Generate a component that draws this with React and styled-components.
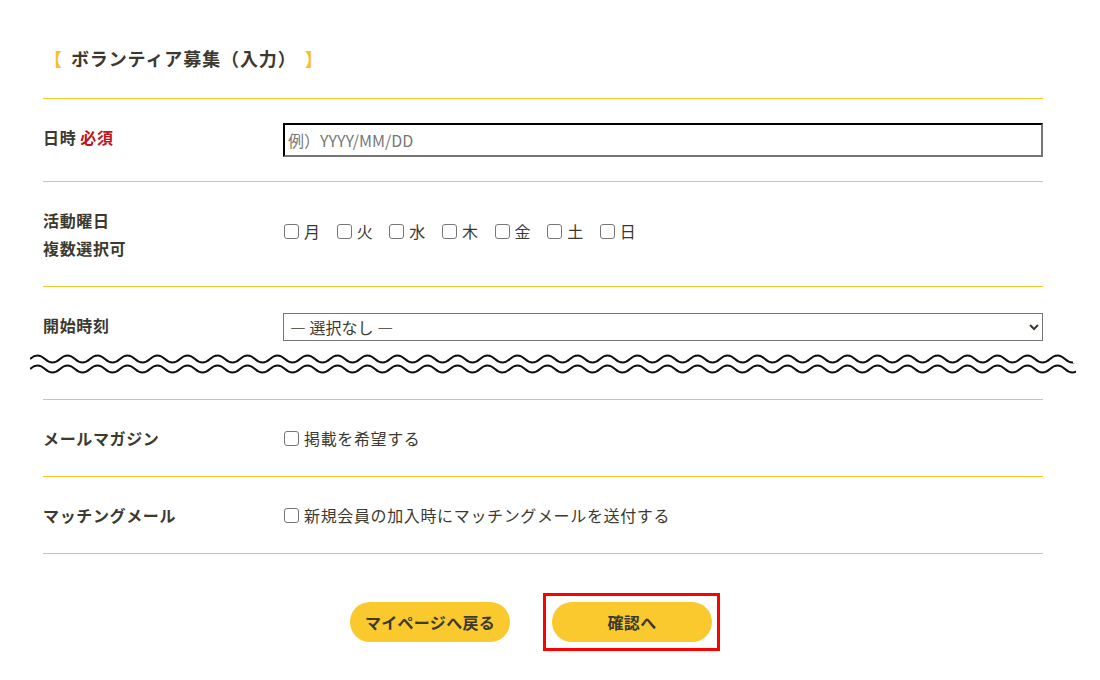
import styled, { createGlobalStyle } from "styled-components";

const GlobalStyle = createGlobalStyle`
  body {
    margin: 0;
    background: #fff;
    font-family: "Noto Sans CJK JP", "Noto Sans", sans-serif;
    color: #3c3a30;
  }
`;

const Page = styled.div`
  width: 1000px;
  padding: 0 0 40px 43px;
`;

const Title = styled.h2`
  margin: 0;
  padding: 46px 0 28px 1px;
  font-size: 18px;
  line-height: 24px;
  font-weight: 700;
  border-bottom: 1px solid #f7c72a;
  letter-spacing: 0.05em;
`;

const Bracket = styled.span`
  color: #f7c02a;
  margin: ${(p) => (p.$close ? "0 0 0 17px" : "0 8px 0 0")};
`;

const Row = styled.div`
  display: grid;
  grid-template-columns: 240px 1fr;
  align-items: start;
  padding: 24px 0;
  border-bottom: 1px solid #f7c72a;
`;

const Label = styled.div`
  font-size: 16px;
  font-weight: 700;
  line-height: 28px;
  letter-spacing: 0.04em;
`;

const Required = styled.span`
  color: #c0141c;
  margin-left: 4px;
`;

const TextInput = styled.input`
  box-sizing: border-box;
  width: 760px;
  height: 34px;
  border: 2px inset #767676;
  border-top-color: #222;
  border-left-color: #222;
  padding: 0 3px;
  font-family: inherit;
  font-size: 16px;
  color: #333;
  &::placeholder {
    color: #777;
  }
`;

const Days = styled.div`
  display: flex;
  align-items: center;
  height: 56px;
  padding-bottom: 6px;
  box-sizing: border-box;
`;

const Check = styled.label`
  display: inline-flex;
  align-items: center;
  font-size: 16px;
  line-height: 28px;
  letter-spacing: 0.04em;
  margin-right: ${(p) => (p.$gap ? "15px" : "0")};
  color: #3c3a30;
`;

const Box = styled.input.attrs({ type: "checkbox" })`
  appearance: none;
  flex: none;
  box-sizing: border-box;
  width: 15px;
  height: 15px;
  margin: 0 5px 0 1px;
  border: 1px solid #767676;
  border-radius: 3px;
  background: #fff;
  &:checked {
    background: #0075ff;
    border-color: #0075ff;
  }
`;

const SelectCell = styled.div`
  display: flex;
  align-items: center;
  height: 32px;
`;

const Select = styled.select`
  box-sizing: border-box;
  width: 760px;
  height: 28px;
  border: 1px solid #767676;
  border-radius: 0;
  background: #fff;
  font-family: inherit;
  font-size: 16px;
  color: #3c3a30;
  padding: 0 2px;
`;

const Cut = styled.svg`
  grid-column: 1 / -1;
  display: block;
  margin: 8px 0 0 -13px;
  width: 1046px;
  height: 24px;
`;

const Actions = styled.div`
  display: flex;
  justify-content: center;
  align-items: center;
  gap: 33px;
  padding: 39px 16px 0 0;
`;

const Button = styled.button`
  width: 160px;
  height: 40px;
  border: none;
  border-radius: 20px;
  background: #fac92e;
  color: #3c3a30;
  font-family: inherit;
  font-size: 16px;
  font-weight: 700;
  letter-spacing: 0.02em;
  cursor: pointer;
`;

const Highlight = styled.div`
  border: 3px solid #f00;
  padding: 6px 5px 6px 6px;
  display: flex;
`;

function wavePath(y) {
  let d = `M0 ${y}`;
  for (let x = 0; x < 1045; x += 30) {
    d += ` q7.5 -7 15 0 t15 0`;
  }
  return d;
}

const days = ["月", "火", "水", "木", "金", "土", "日"];

export default function App() {
  return (
    <Page>
      <GlobalStyle />
      <Title>
        <Bracket>【</Bracket>ボランティア募集（入力）<Bracket $close>】</Bracket>
      </Title>

      <Row>
        <Label>
          日時<Required>必須</Required>
        </Label>
        <TextInput placeholder="例）YYYY/MM/DD" />
      </Row>

      <Row>
        <Label>
          活動曜日
          <br />
          複数選択可
        </Label>
        <Days>
          {days.map((d, i) => (
            <Check key={d} $gap={i < days.length - 1}>
              <Box />
              {d}
            </Check>
          ))}
        </Days>
      </Row>

      <Row>
        <Label>開始時刻</Label>
        <SelectCell>
          <Select defaultValue="">
            <option value="">― 選択なし ―</option>
          </Select>
        </SelectCell>
        <Cut viewBox="0 0 1046 24">
          <clipPath id="cutclip">
            <rect x="0" y="0" width="1043" height="12" />
            <rect x="0" y="12" width="1046" height="12" />
          </clipPath>
          <g fill="none" stroke="#111" strokeWidth="2" clipPath="url(#cutclip)">
            <path d={wavePath(8)} />
            <path d={wavePath(18)} />
          </g>
        </Cut>
      </Row>

      <Row>
        <Label>メールマガジン</Label>
        <Check>
          <Box />
          掲載を希望する
        </Check>
      </Row>

      <Row>
        <Label>マッチングメール</Label>
        <Check>
          <Box />
          新規会員の加入時にマッチングメールを送付する
        </Check>
      </Row>

      <Actions>
        <Button>マイページへ戻る</Button>
        <Highlight>
          <Button>確認へ</Button>
        </Highlight>
      </Actions>
    </Page>
  );
}
